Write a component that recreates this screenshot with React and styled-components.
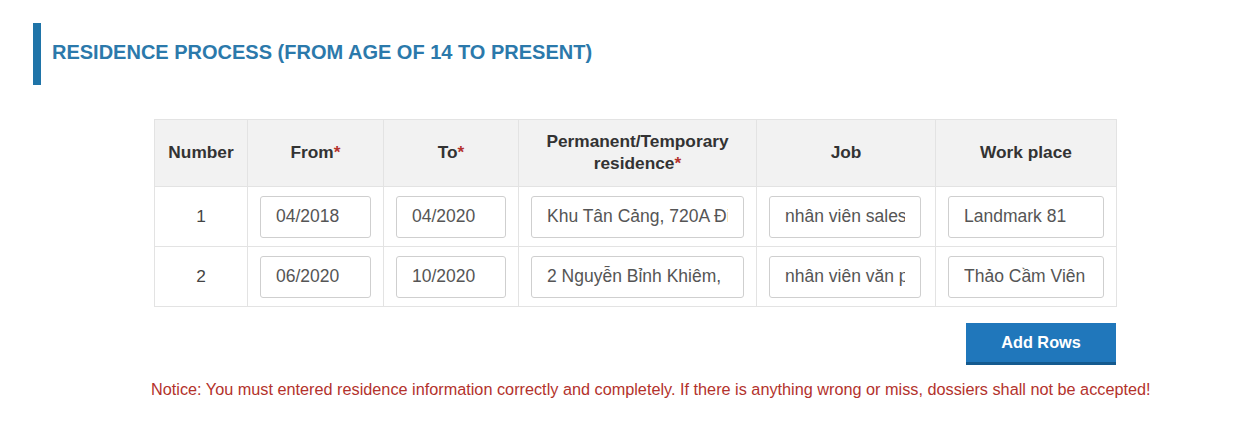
import React from "react";
import styled, { createGlobalStyle } from "styled-components";

const Global = createGlobalStyle`
  html, body { margin: 0; padding: 0; background: #fff; }
  body { font-family: "Liberation Sans", Arial, sans-serif; }
  * { box-sizing: border-box; }
`;

const Page = styled.div`
  width: 1248px;
  height: 432px;
  padding: 23px 0 0 33px;
  background: #fff;
`;

const Heading = styled.h2`
  margin: 0;
  height: 62px;
  display: flex;
  align-items: center;
  border-left: 8px solid #1f74a8;
  padding-left: 11px;
  padding-bottom: 4px;
  font-size: 20px;
  font-weight: 700;
  color: #2b79ab;
  letter-spacing: 0;
`;

const Section = styled.div`
  width: 962px;
  margin: 34px 0 0 121px;
  display: flex;
  flex-direction: column;
`;

const Table = styled.table`
  width: 962px;
  border-collapse: collapse;
  table-layout: fixed;
`;

const Th = styled.th`
  background: #f2f2f2;
  border: 1px solid #e3e3e3;
  height: 67px;
  padding: 0 6px 2px;
  font-size: 17.3px;
  font-weight: 700;
  color: #333;
  text-align: center;
  line-height: 22px;
  width: ${(p) => p.$w}px;
`;

const Req = styled.span`
  color: #b5332e;
`;

const Td = styled.td`
  border: 1px solid #e3e3e3;
  height: 60px;
  padding: 0 12px;
  font-size: 17.3px;
  color: #444;
  text-align: center;
  vertical-align: middle;
`;

const Input = styled.input`
  display: block;
  width: ${(p) => (p.$narrow ? "calc(100% - 2px)" : "100%")};
  height: 42px;
  border: 1px solid #cfcfcf;
  border-radius: 3px;
  padding: 0 15px;
  font-family: "Liberation Sans", Arial, sans-serif;
  font-size: 17.5px;
  color: #555;
  background: #fff;
  outline: none;
`;

const Actions = styled.div`
  display: flex;
  justify-content: flex-end;
  margin-top: 16px;
`;

const Button = styled.button`
  width: 150px;
  height: 42px;
  border: none;
  border-bottom: 3px solid #145a8f;
  background: #2077bb;
  color: #fff;
  font-family: "Liberation Sans", Arial, sans-serif;
  font-size: 16.3px;
  font-weight: 700;
  padding: 0;
  cursor: pointer;
`;

const Notice = styled.p`
  margin: 15px 0 0 -3px;
  width: 1010px;
  text-align: left;
  font-size: 16.25px;
  color: #b3322c;
`;

const rows = [
  ["1", "04/2018", "04/2020", "Khu Tân Cảng, 720A Điện Biên Phủ", "nhân viên sales", "Landmark 81"],
  ["2", "06/2020", "10/2020", "2 Nguyễn Bỉnh Khiêm,  Quận 1", "nhân viên văn phòng", "Thảo Cầm Viên"],
];

export default function App() {
  return (
    <Page>
      <Global />
      <Heading>RESIDENCE PROCESS (FROM AGE OF 14 TO PRESENT)</Heading>
      <Section>
        <Table>
          <thead>
            <tr>
              <Th $w={93}>Number</Th>
              <Th $w={136}>From<Req>*</Req></Th>
              <Th $w={135}>To<Req>*</Req></Th>
              <Th $w={238}>Permanent/Temporary residence<Req>*</Req></Th>
              <Th $w={179}>Job</Th>
              <Th $w={181}>Work place</Th>
            </tr>
          </thead>
          <tbody>
            {rows.map((r) => (
              <tr key={r[0]}>
                <Td>{r[0]}</Td>
                {r.slice(1).map((v, i) => (
                  <Td key={i}>
                    <Input $narrow={i === 3} defaultValue={v} readOnly />
                  </Td>
                ))}
              </tr>
            ))}
          </tbody>
        </Table>
        <Actions>
          <Button>Add Rows</Button>
        </Actions>
        <Notice>
          Notice: You must entered residence information correctly and completely. If there is anything wrong or miss, dossiers shall not be accepted!
        </Notice>
      </Section>
    </Page>
  );
}
